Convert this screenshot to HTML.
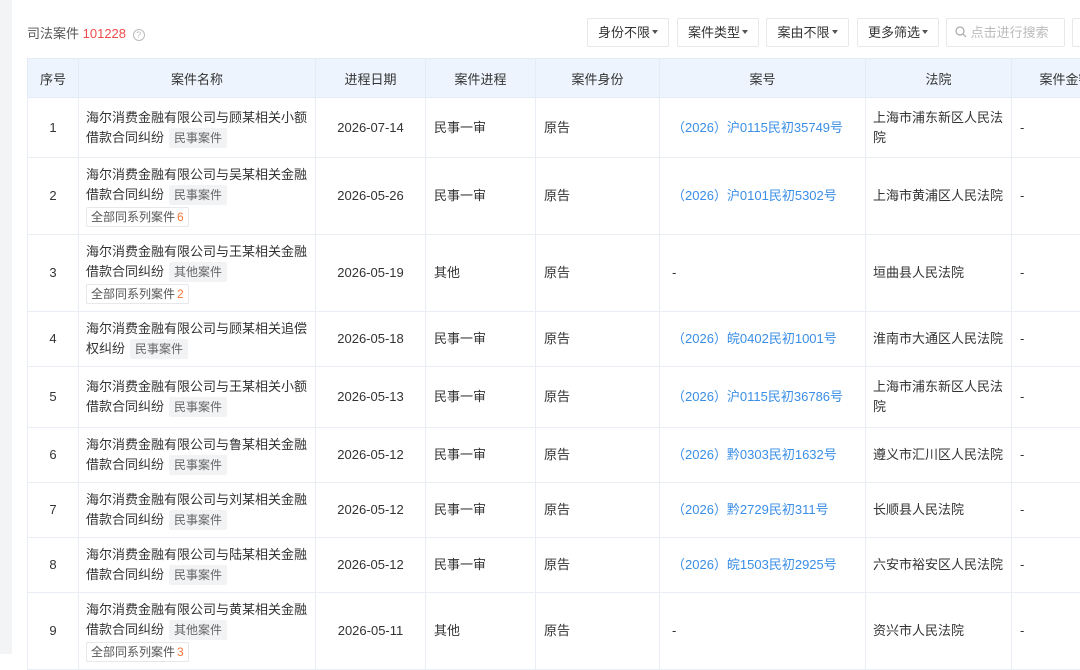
<!DOCTYPE html>
<html><head><meta charset="utf-8"><style>
*{margin:0;padding:0;box-sizing:border-box}
html,body{width:1080px;height:654px;overflow:hidden;background:#fff;font-family:"Liberation Sans","Noto Sans CJK SC",sans-serif;color:#333;font-size:13px}
.side{position:absolute;left:0;top:0;width:12px;height:654px;background:#f3f4f6}
.title{position:absolute;left:27px;top:23px;font-size:13px;color:#555}
.title b{font-weight:normal;color:#f04b4b}
.q{display:inline-block;width:12px;height:12px;border:1px solid #bbb;border-radius:50%;font-size:9px;line-height:10px;text-align:center;color:#bbb;vertical-align:0px;margin-left:3px}
.btn{position:absolute;top:18px;height:29px;border:1px solid #e6e8eb;border-radius:2px;font-size:13px;line-height:27px;text-align:center;color:#333}
.btn i{display:inline-block;border:3.5px solid transparent;border-top:4px solid #555;border-bottom:0;vertical-align:3px;margin-left:2px}
.srch{color:#bbb;text-align:left;padding-left:8px}
table{position:absolute;left:27px;top:58px;border-collapse:collapse;table-layout:fixed;width:1092px}
th{background:#edf4fd;height:39px;font-weight:normal;color:#333;border:1px solid #e3ecf7;font-size:13px}
td{border:1px solid #e9eef5;padding:0 8px;vertical-align:middle;line-height:20px}
td.c{text-align:center}
td.n{padding:0 0 0 7px}
td.ct{padding:0 0 0 7px}
.tag{display:inline-block;background:#f2f3f5;color:#666;font-size:12px;line-height:20px;padding:0 5px;margin-left:5px;border-radius:2px}
.ser{display:inline-block;border:1px solid #e6e8eb;color:#555;font-size:12px;line-height:18px;padding:0 4px;margin-top:2px;border-radius:2px}
.ser b{font-weight:normal;color:#f5783b;margin-left:2px}
.lnk{color:#3a8ee6;padding-left:12px}
</style></head><body>
<div class="side"></div>
<div class="title">司法案件 <b>101228</b> <span class="q">?</span></div>
<div class="btn" style="left:587px;width:82px">身份不限<i></i></div>
<div class="btn" style="left:677px;width:82px">案件类型<i></i></div>
<div class="btn" style="left:766px;width:83px">案由不限<i></i></div>
<div class="btn" style="left:857px;width:82px">更多筛选<i></i></div>
<div class="btn srch" style="left:946px;width:119px"><svg width="12" height="12" viewBox="0 0 12 12" style="vertical-align:-1px"><circle cx="5" cy="5" r="4" fill="none" stroke="#aaa" stroke-width="1.2"/><path d="M8 8l3 3" stroke="#aaa" stroke-width="1.2"/></svg> 点击进行搜索</div>
<div class="btn" style="left:1072px;width:30px"></div>
<table>
<colgroup><col style="width:51px"><col style="width:237px"><col style="width:110px"><col style="width:110px"><col style="width:124px"><col style="width:206px"><col style="width:146px"><col style="width:108px"></colgroup>
<tr><th>序号</th><th>案件名称</th><th>进程日期</th><th>案件进程</th><th>案件身份</th><th>案号</th><th>法院</th><th>案件金额</th></tr>
<tr style="height:60px"><td class="c">1</td><td class="n">海尔消费金融有限公司与顾某相关小额借款合同纠纷<span class="tag">民事案件</span></td><td class="c">2026-07-14</td><td>民事一审</td><td>原告</td><td class="lnk">（2026）沪0115民初35749号</td><td class="ct">上海市浦东新区人民法院</td><td>-</td></tr>
<tr style="height:77px"><td class="c">2</td><td class="n">海尔消费金融有限公司与吴某相关金融借款合同纠纷<span class="tag">民事案件</span><br><span class="ser">全部同系列案件<b>6</b></span></td><td class="c">2026-05-26</td><td>民事一审</td><td>原告</td><td class="lnk">（2026）沪0101民初5302号</td><td class="ct">上海市黄浦区人民法院</td><td>-</td></tr>
<tr style="height:77px"><td class="c">3</td><td class="n">海尔消费金融有限公司与王某相关金融借款合同纠纷<span class="tag">其他案件</span><br><span class="ser">全部同系列案件<b>2</b></span></td><td class="c">2026-05-19</td><td>其他</td><td>原告</td><td style="padding-left:12px">-</td><td class="ct">垣曲县人民法院</td><td>-</td></tr>
<tr style="height:55px"><td class="c">4</td><td class="n">海尔消费金融有限公司与顾某相关追偿权纠纷<span class="tag">民事案件</span></td><td class="c">2026-05-18</td><td>民事一审</td><td>原告</td><td class="lnk">（2026）皖0402民初1001号</td><td class="ct">淮南市大通区人民法院</td><td>-</td></tr>
<tr style="height:61px"><td class="c">5</td><td class="n">海尔消费金融有限公司与王某相关小额借款合同纠纷<span class="tag">民事案件</span></td><td class="c">2026-05-13</td><td>民事一审</td><td>原告</td><td class="lnk">（2026）沪0115民初36786号</td><td class="ct">上海市浦东新区人民法院</td><td>-</td></tr>
<tr style="height:55px"><td class="c">6</td><td class="n">海尔消费金融有限公司与鲁某相关金融借款合同纠纷<span class="tag">民事案件</span></td><td class="c">2026-05-12</td><td>民事一审</td><td>原告</td><td class="lnk">（2026）黔0303民初1632号</td><td class="ct">遵义市汇川区人民法院</td><td>-</td></tr>
<tr style="height:55px"><td class="c">7</td><td class="n">海尔消费金融有限公司与刘某相关金融借款合同纠纷<span class="tag">民事案件</span></td><td class="c">2026-05-12</td><td>民事一审</td><td>原告</td><td class="lnk">（2026）黔2729民初311号</td><td class="ct">长顺县人民法院</td><td>-</td></tr>
<tr style="height:55px"><td class="c">8</td><td class="n">海尔消费金融有限公司与陆某相关金融借款合同纠纷<span class="tag">民事案件</span></td><td class="c">2026-05-12</td><td>民事一审</td><td>原告</td><td class="lnk">（2026）皖1503民初2925号</td><td class="ct">六安市裕安区人民法院</td><td>-</td></tr>
<tr style="height:77px"><td class="c">9</td><td class="n">海尔消费金融有限公司与黄某相关金融借款合同纠纷<span class="tag">其他案件</span><br><span class="ser">全部同系列案件<b>3</b></span></td><td class="c">2026-05-11</td><td>其他</td><td>原告</td><td style="padding-left:12px">-</td><td class="ct">资兴市人民法院</td><td>-</td></tr>
</table>
</body></html>
